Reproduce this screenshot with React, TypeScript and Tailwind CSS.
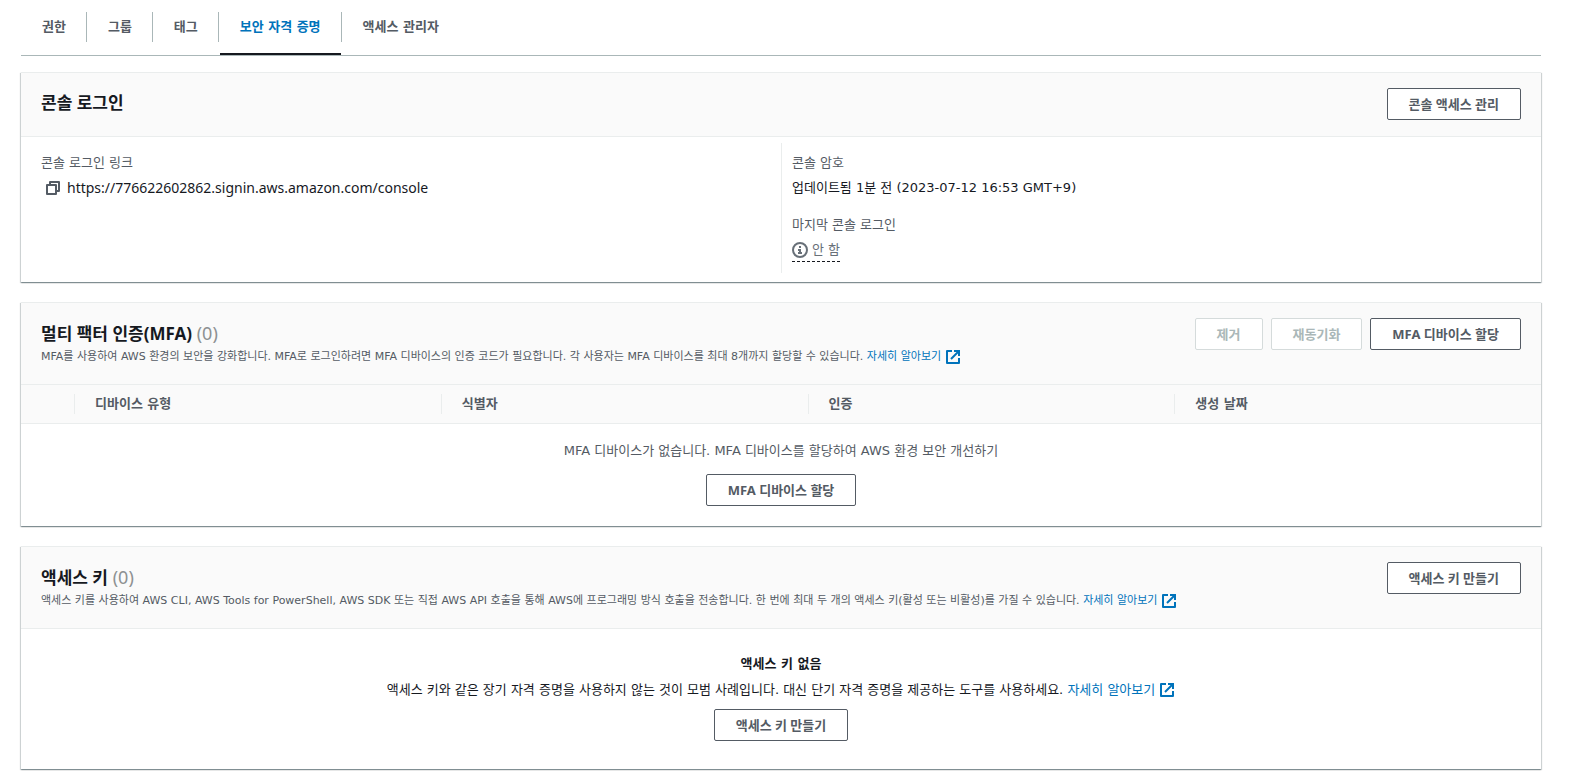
import React from "react";
import clsx from "clsx";

const tabs = [
  { id: "permissions", label: "권한" },
  { id: "groups", label: "그룹" },
  { id: "tags", label: "태그" },
  { id: "security", label: "보안 자격 증명" },
  { id: "advisor", label: "액세스 관리자" },
];

const mfaColumns = ["디바이스 유형", "식별자", "인증", "생성 날짜"];

const CopyIcon = () => (
  <svg
    className="size-4 shrink-0"
    viewBox="0 0 16 16"
    fill="none"
    stroke="currentColor"
    strokeWidth="2"
    aria-hidden="true"
  >
    <path d="M2 5h9v9H2z" strokeLinejoin="round" />
    <path d="M5 5V2h9v9h-3" strokeLinejoin="round" />
  </svg>
);

const InfoIcon = () => (
  <svg
    className="size-4 shrink-0"
    viewBox="0 0 16 16"
    fill="none"
    stroke="currentColor"
    strokeWidth="2"
    aria-hidden="true"
  >
    <circle cx="8" cy="8" r="7" />
    <path d="M8 11V8H6M10 11H6M8 6V4" />
  </svg>
);

const ExternalIcon = () => (
  <svg
    className="size-4 shrink-0"
    viewBox="0 0 16 16"
    fill="none"
    stroke="currentColor"
    strokeWidth="2"
    aria-hidden="true"
  >
    <path d="M9 2h5v5M6 10l8-8" />
    <path d="M14 9v5H2V2h5" strokeLinejoin="round" />
  </svg>
);

const Button = ({
  children,
  disabled,
}: {
  children: React.ReactNode;
  disabled?: boolean;
}) => (
  <button
    disabled={disabled}
    className={clsx(
      "h-8 px-[21px] border rounded-xs bg-white font-bold whitespace-nowrap font-['Noto_Sans','Noto_Sans_CJK_KR',sans-serif]",
      disabled
        ? "border-[#d5dbdb] text-[#aab7b8]"
        : "border-[#545b64] text-[#545b64] hover:bg-[#fafafa]",
    )}
  >
    {children}
  </button>
);

const LearnMore = () => (
  <a
    href="#"
    className="inline-flex items-center gap-1 text-[#0073bb] hover:underline"
  >
    자세히 알아보기
    <ExternalIcon />
  </a>
);

const Panel = ({
  title,
  count,
  description,
  actions,
  children,
}: {
  title: string;
  count?: number;
  description?: string;
  actions: React.ReactNode;
  children: React.ReactNode;
}) => (
  <section className="border-t border-[#eaeded] bg-white shadow-[0_1px_1px_0_rgba(0,28,36,0.3),1px_1px_1px_0_rgba(0,28,36,0.15),-1px_1px_1px_0_rgba(0,28,36,0.15)]">
    <header className="flex items-start justify-between gap-4 border-b border-[#eaeded] bg-[#fafafa] px-5 pt-[15px] pb-4">
      <div className="pt-1 pb-px">
        <h2 className="text-[17px] leading-[22px] font-bold font-['Noto_Sans','Noto_Sans_CJK_KR',sans-serif]">
          {title}
          {count !== undefined && (
            <span className="text-lg leading-[22px] font-normal text-[#8d9192]">
              {" "}
              ({count})
            </span>
          )}
        </h2>
        {description && (
          <p className="mt-0.5 text-[11px] leading-5 text-[#545b64]">
            {description} <LearnMore />
          </p>
        )}
      </div>
      <div className="flex gap-2">{actions}</div>
    </header>
    {children}
  </section>
);

export default function App() {
  return (
    <main className="pl-[21px] pr-7 pt-3 pb-2 bg-white text-[13px] leading-[22px] text-[#16191f] font-['DejaVu_Sans','Noto_Sans_CJK_KR',sans-serif]">
      {/* Tabs */}
      <nav className="flex border-b border-[#aab7b8]">
        {tabs.map((tab, i) => {
          const active = tab.id === "security";
          return (
            <a
              key={tab.id}
              href="#"
              aria-current={active ? "page" : undefined}
              className={clsx(
                "flex flex-col font-bold",
                active ? "text-[#0073bb]" : "text-[#545b64]",
              )}
            >
              <span
                className={clsx(
                  "h-[30px] pl-[21px] pr-5 leading-[30px]",
                  i < tabs.length - 1 && "border-r border-[#aab7b8]",
                )}
              >
                {tab.label}
              </span>
              <span
                className={clsx("mt-[11px] mx-px h-0.5", active && "bg-[#16191f]")}
              />
            </a>
          );
        })}
      </nav>

      <div className="mt-4 flex flex-col gap-5">
        {/* Console sign-in */}
        <Panel title="콘솔 로그인" actions={<Button>콘솔 액세스 관리</Button>}>
          <div className="grid grid-cols-2 pt-1.5 pb-[9px]">
            <dl className="px-5 pt-[9px]">
              <dt className="text-[#545b64]">콘솔 로그인 링크</dt>
              <dd className="mt-[3px] flex items-center text-sm leading-[22px] font-['Noto_Sans','Noto_Sans_CJK_KR',sans-serif]">
                <button
                  aria-label="링크 복사"
                  className="ml-1 mr-1.5 text-[#545b64]"
                >
                  <CopyIcon />
                </button>
                https://776622602862.signin.aws.amazon.com/console
              </dd>
            </dl>
            <dl className="border-l border-[#eaeded] px-2.5 pt-[9px] pb-2">
              <dt className="text-[#545b64]">콘솔 암호</dt>
              <dd className="mt-[3px]">
                업데이트됨 1분 전 (2023-07-12 16:53 GMT+9)
              </dd>
              <dt className="mt-[15px] text-[#545b64]">마지막 콘솔 로그인</dt>
              <dd className="mt-[3px] text-[#687078]">
                <span className="inline-flex items-center gap-1 border-b border-dashed border-[#16191f]">
                  <InfoIcon />안 함
                </span>
              </dd>
            </dl>
          </div>
        </Panel>

        {/* MFA devices */}
        <Panel
          title="멀티 팩터 인증(MFA)"
          count={0}
          description="MFA를 사용하여 AWS 환경의 보안을 강화합니다. MFA로 로그인하려면 MFA 디바이스의 인증 코드가 필요합니다. 각 사용자는 MFA 디바이스를 최대 8개까지 할당할 수 있습니다."
          actions={
            <>
              <Button disabled>제거</Button>
              <Button disabled>재동기화</Button>
              <Button>MFA 디바이스 할당</Button>
            </>
          }
        >
          <table className="w-full table-fixed">
            <thead className="border-b border-[#eaeded] bg-[#fafafa] text-left text-[#545b64]">
              <tr>
                <td className="w-[53px]" />
                {mfaColumns.map((column) => (
                  <th key={column} className="py-[9px] font-bold">
                    <div className="border-l border-[#eaeded] pl-5 leading-5">
                      {column}
                    </div>
                  </th>
                ))}
              </tr>
            </thead>
            <tbody>
              <tr>
                <td colSpan={5} className="pt-4 pb-5 text-center text-[#545b64]">
                  <p className="mb-3">
                    MFA 디바이스가 없습니다. MFA 디바이스를 할당하여 AWS 환경
                    보안 개선하기
                  </p>
                  <Button>MFA 디바이스 할당</Button>
                </td>
              </tr>
            </tbody>
          </table>
        </Panel>

        {/* Access keys */}
        <Panel
          title="액세스 키"
          count={0}
          description="액세스 키를 사용하여 AWS CLI, AWS Tools for PowerShell, AWS SDK 또는 직접 AWS API 호출을 통해 AWS에 프로그래밍 방식 호출을 전송합니다. 한 번에 최대 두 개의 액세스 키(활성 또는 비활성)를 가질 수 있습니다."
          actions={<Button>액세스 키 만들기</Button>}
        >
          <div className="px-5 pt-6 pb-7 text-center">
            <h3 className="font-bold">액세스 키 없음</h3>
            <p className="mt-1 mb-2">
              액세스 키와 같은 장기 자격 증명을 사용하지 않는 것이 모범
              사례입니다. 대신 단기 자격 증명을 제공하는 도구를 사용하세요.{" "}
              <LearnMore />
            </p>
            <Button>액세스 키 만들기</Button>
          </div>
        </Panel>
      </div>
    </main>
  );
}
